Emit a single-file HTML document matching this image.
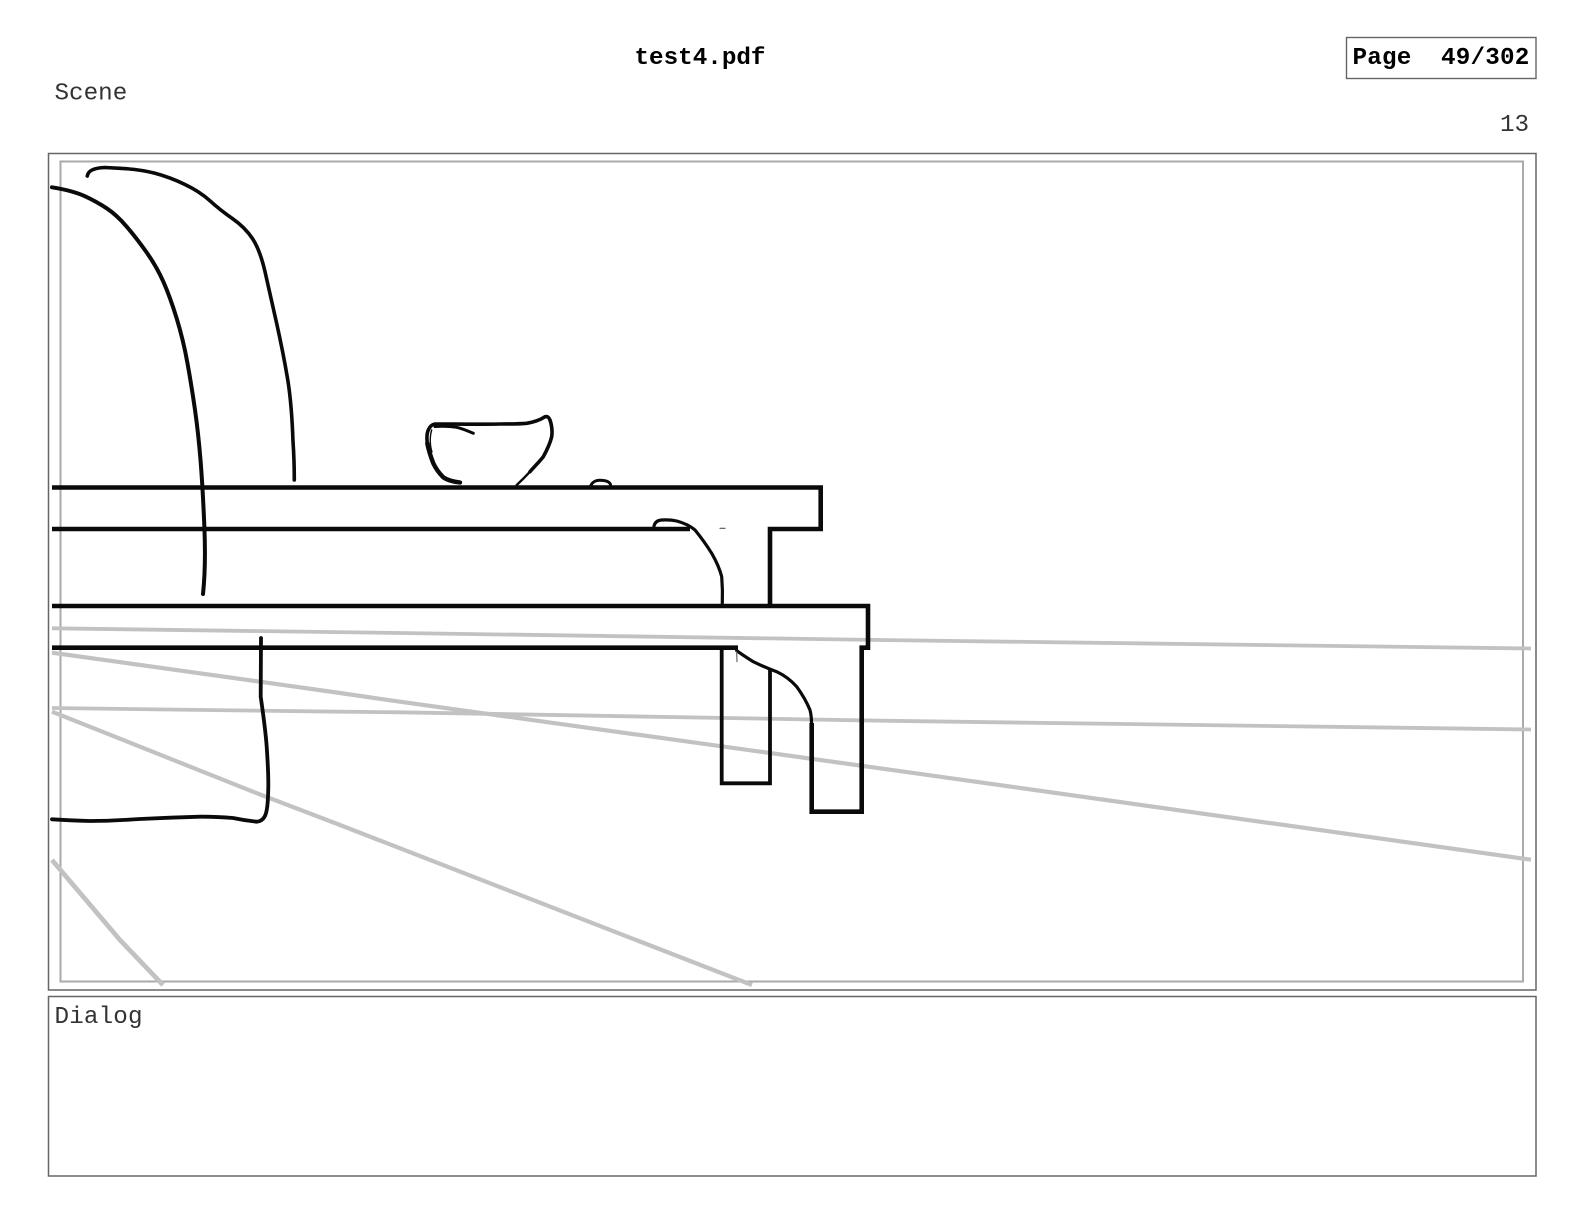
<!DOCTYPE html>
<html>
<head>
<meta charset="utf-8">
<style>
html,body{margin:0;padding:0;background:#fff;width:1584px;height:1224px;overflow:hidden}
svg{position:absolute;left:0;top:0;display:block}
text{font-family:"Liberation Mono","Courier New",monospace;font-size:24.25px;fill:#333}
text.b{font-weight:bold;fill:#000}
</style>
</head>
<body>
<svg width="1584" height="1224" viewBox="0 0 1584 1224" xmlns="http://www.w3.org/2000/svg">
<rect width="1584" height="1224" fill="#fff"/>
<text class="b" x="634.5" y="64">test4.pdf</text>
<text x="54.5" y="99.5">Scene</text>
<text x="1500" y="131">13</text>
<text x="54.5" y="1023" letter-spacing="0.15">Dialog</text>
<rect x="1346.5" y="37.5" width="189.5" height="41" fill="none" stroke="#666" stroke-width="1.4"/>
<text class="b" x="1352.5" y="64" letter-spacing="0.2" xml:space="preserve">Page  49/302</text>
<rect x="48.5" y="153.5" width="1487.5" height="836.5" fill="none" stroke="#666" stroke-width="1.5"/>
<rect x="48.5" y="996.5" width="1487.5" height="179.5" fill="none" stroke="#666" stroke-width="1.5"/>
<rect x="60.5" y="161.5" width="1462.5" height="820" fill="none" stroke="#aaa" stroke-width="2"/>
<g fill="none" stroke="#c2c2c2" stroke-linecap="butt" stroke-linejoin="round">
<path stroke-width="3.8" d="M52 628.3 L400 633 L880 640 L1531 648.5"/>
<path stroke-width="3.8" d="M52 708 L340 711.7 L400 712.3 L880 720.7 L1531 729.5"/>
<path stroke-width="4.2" d="M52 652.7 L260 681.7 L340 693 L400 701.7 L880 768.3 L1531 859.7"/>
<path stroke-width="4.2" d="M52 711.7 L140 746.7 L253 791.7 L340 825 L752 985"/>
<path stroke-width="4.8" d="M52 860 L120 940 L163 985"/>
</g>
<g fill="none" stroke="#0a0a0a" stroke-linecap="butt" stroke-linejoin="miter">
<path stroke-width="4.6" d="M52 487.5 H820.7 V529 H770 V606"/>
<path stroke-width="4.6" d="M52 529 H690"/>
<path stroke-width="4.6" d="M52 606 H868 V647.7 H861.7 V811.7 H811.7 V723"/>
<path stroke-width="4.6" d="M52 647.7 H738"/>
<path stroke-width="3.8" d="M721.7 647.7 V783.3 H770 V669.3"/>
</g>
<g fill="none" stroke="#0a0a0a" stroke-linecap="round" stroke-linejoin="round">
<path stroke-width="4" d="M52 187.3 Q73 190.7 84.85 196.2 Q96.7 201.7 106.7 208.35 Q116.7 215 126.7 226.65 Q136.7 238.3 146.7 252.5 Q156.7 266.7 163.35 281.7 Q170 296.7 176.65 318.35 Q183.3 340 187.5 363.35 Q191.7 386.7 195 409.85 Q198.3 433 200.5 459.85 Q202.7 486.7 204.35 526.35 Q206 566 203 594"/>
<path stroke-width="3.6" d="M87.3 176 Q88.5 168 105 167.5 L120 168.3 Q140 169.3 155 173.3 Q170 177.3 185 184.5 Q200 191.7 210 200.85 Q220 210 232.5 218.65 Q245 227.3 252.5 238.65 Q260 250 265 271.65 Q270 293.3 276.65 323.3 Q283.3 353.3 287.5 378.3 Q291.7 403.3 293 441.65 Q294.3 460 294.3 480"/>
<path stroke-width="3.8" d="M261 638 L260.7 696.7 Q265.5 730 266.7 746.7 Q268.5 773 268.3 786.7 Q268 804 266.7 810 Q265 821 256.7 821.7 Q245 820.5 233 818 Q215 816.5 200 816.7 Q170 817.5 140 819 Q110 821 90 821 Q70 820.5 52 819.3"/>
<path stroke-width="4.4" d="M460 482.5 C452 481.5 447 480 443.3 477.3 C438 472 435.5 468 433.3 463.3 C430.5 456 428.5 450 427.3 443.3"/>
<path stroke-width="3.6" d="M427.3 443.3 C426.5 437 427 433 428.3 430 C430 426 432 424.5 435 424 C455 424 478 424.5 500 424 C510 424 519 424 526.7 423.3 C534 422 540 420 545 416.7 C548 416 549 418 550 420 C552 426 552.5 431 551.7 436.7 C550 444 547 450 543.3 456.7 C539 462 535 466 530 471.7"/>
<path stroke-width="2.4" d="M530 471.7 C526 476 521 481 516.7 485"/>
<path stroke-width="3" d="M435 426.5 C443 426 450 426.3 456.7 427.3 C462 428.5 468 431 473.3 433.3"/>
<path stroke-width="1.4" d="M431.7 430 C429.5 437 430 446 432 452"/>
<path stroke-width="3" d="M590.7 486 C592 482 596 480.3 600 480.3 C605 480.3 609 481 610.5 484.5"/>
<path stroke-width="3.2" d="M654 526 Q655.5 520.3 661.7 520 Q670 519.5 676.7 521 Q688 524 695 530 Q704 541 711.7 553.3 Q719 566 721.7 576.7 Q722.8 590 722.3 603"/>
<path stroke-width="3.2" d="M811.5 723 Q811.5 716 810 710 Q805 698 796.7 686.7 Q788 677 776.7 671.7 Q764 667 753.3 661.7 Q744 656 736.7 650.7"/>
<path stroke-width="1.2" stroke="#666" d="M736.7 652 L737 661.7"/>
<path stroke-width="1.2" stroke="#555" d="M720 528.3 H725"/>
</g>
</svg>
</body>
</html>
